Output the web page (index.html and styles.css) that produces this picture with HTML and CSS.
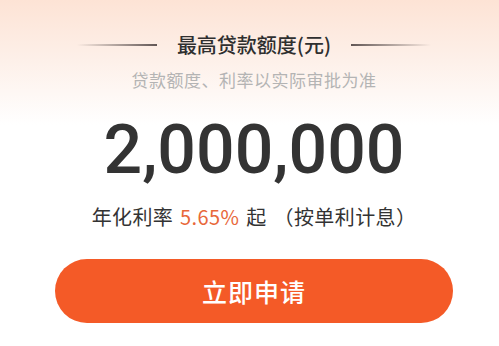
FILE: index.html
```html
<!DOCTYPE html>
<html lang="zh-CN">
<head>
<meta charset="utf-8">
<link rel="stylesheet" href="styles.css">
</head>
<body>
<div class="card">
  <div class="title-row">
    <span class="line line-left"></span>
    <h1 class="title">最高贷款额度(元)</h1>
    <span class="line line-right"></span>
  </div>
  <p class="subtitle">贷款额度、利率以实际审批为准</p>
  <div class="amount">2,000,000</div>
  <p class="rate">年化利率 <span class="rate-num">5.65%</span> 起 （按单利计息）</p>
  <button class="apply">立即申请</button>
</div>
</body>
</html>
```

FILE: styles.css
```css
html, body {
  margin: 0;
  padding: 0;
  background: #ffffff;
}
body {
  width: 499px;
  height: 346px;
  overflow: hidden;
  font-family: "Noto Sans CJK SC", "Noto Sans", sans-serif;
}
.card {
  box-sizing: border-box;
  height: 346px;
  padding: 33px 0 0 9px;
  display: flex;
  flex-direction: column;
  align-items: center;
  background: linear-gradient(180deg, #fde3d5 0px, #fdf0e9 60px, #ffffff 125px);
}
.title-row {
  display: flex;
  align-items: center;
  gap: 20px;
  height: 24px;
}
.line {
  display: block;
  width: 80px;
  height: 1.5px;
}
.line-left {
  background: linear-gradient(90deg, rgba(70,60,60,0) 0%, rgba(70,60,60,0.85) 100%);
}
.line-right {
  background: linear-gradient(90deg, rgba(70,60,60,0.85) 0%, rgba(70,60,60,0) 100%);
}
.title {
  margin: 0;
  font-size: 20px;
  line-height: 24px;
  font-weight: 500;
  color: #2f2f2f;
}
.subtitle {
  margin: 12px 0 0;
  font-size: 17px;
  line-height: 22px;
  color: #b4b4b4;
  letter-spacing: 0.5px;
}
.amount {
  margin-top: 25px;
  font-family: Roboto, "Liberation Sans", sans-serif;
  font-size: 68px;
  line-height: 68px;
  font-weight: 500;
  color: #333333;
}
.rate {
  margin: 21px 0 0;
  font-size: 20px;
  line-height: 24px;
  color: #333333;
  letter-spacing: 0.4px;
  word-spacing: 2px;
  white-space: pre;
}
.rate-num {
  color: #e8683a;
}
.apply {
  margin-top: 30px;
  width: 398px;
  height: 64px;
  border: none;
  border-radius: 32px;
  background: #f45a27;
  color: #ffffff;
  font-family: "Noto Sans CJK SC", "Noto Sans", sans-serif;
  font-size: 25px;
  font-weight: 500;
  letter-spacing: 1px;
  padding: 0;
}
```
